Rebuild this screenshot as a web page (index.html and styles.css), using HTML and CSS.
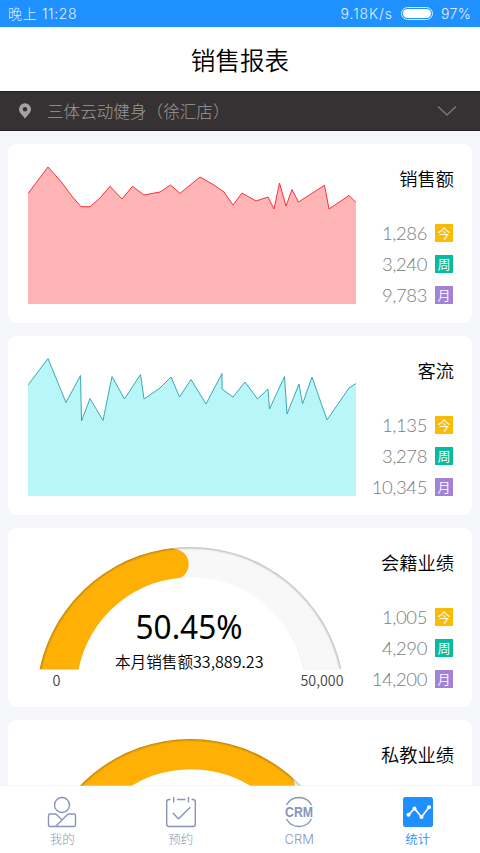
FILE: index.html
```html
<!DOCTYPE html>
<html lang="zh-CN">
<head>
<meta charset="utf-8">
<title>销售报表</title>
<link rel="stylesheet" href="styles.css">
</head>
<body>
<div class="app">
  <div class="status">
    <span class="clock">晚上 11:28</span>
    <span class="net">9.18K/s</span>
    <span class="battery"></span>
    <span class="pct">97%</span>
  </div>
  <header class="header"><h1>销售报表</h1></header>
  <div class="shop">
    <svg class="pin" width="12" height="16" viewBox="0 0 12 16"><path fill-rule="evenodd" d="M6 .3A6 6 0 0 0 0 6.300C0 9.800 4 12.500 6 15.700 8 12.500 12 9.800 12 6.300A6 6 0 0 0 6 .3ZM6 3.900a2.300 2.300 0 1 1 0 4.600a2.300 2.300 0 0 1 0-4.600Z"/></svg>
    <span class="shop-name">三体云动健身（徐汇店）</span>
    <svg class="chevron" width="20" height="12" viewBox="0 0 20 12"><path d="M1 1.500 10 10 19 1.500"/></svg>
  </div>
  <main class="cards">
    <section class="card">
      <svg class="chart" width="328" height="179" viewBox="28 144 328 179">
        <path class="area red" d="M28 193.500 48 167 61 181.500 71 195 81 206.700H90L100 198 110 186.300 122 199 132.500 186.300 144 195 160 192 170.500 185 180 193.300 200 177 214 185 224 192 233 205 242 193 256 201 268 197 274 209 279.500 183 286 206 292 189.500 298.500 202 324.500 185.300 329 209 349 195.500 356 202.500V304H28Z"/>
        <path class="line red-line" d="M28 193.500 48 167 61 181.500 71 195 81 206.700H90L100 198 110 186.300 122 199 132.500 186.300 144 195 160 192 170.500 185 180 193.300 200 177 214 185 224 192 233 205 242 193 256 201 268 197 274 209 279.500 183 286 206 292 189.500 298.500 202 324.500 185.300 329 209 349 195.500 356 202.500"/>
      </svg>
      <div class="info">
        <h2>销售额</h2>
        <div class="row"><span>1,286</span><b class="tag day">今</b></div>
        <div class="row"><span>3,240</span><b class="tag week">周</b></div>
        <div class="row"><span>9,783</span><b class="tag month">月</b></div>
      </div>
    </section>
    <section class="card">
      <svg class="chart" width="328" height="179" viewBox="28 336 328 179">
        <path class="area teal" d="M28 385 48 358.500 66 402.500 80.500 375.500 81.500 421 90 398.500 103 420.500 112 376.500 124.500 399 140.500 374.500 144 399 160 388 171 377 179.500 397 191 379.500 206 404 222 373.500V389L233 397 245 382 257.500 399 268 389 269.500 409 284.500 376.500 287 414 299 384 302.500 404 312 377 327 420 349 388 356 383.500V496H28Z"/>
        <path class="line teal-line" d="M28 385 48 358.500 66 402.500 80.500 375.500 81.500 421 90 398.500 103 420.500 112 376.500 124.500 399 140.500 374.500 144 399 160 388 171 377 179.500 397 191 379.500 206 404 222 373.500V389L233 397 245 382 257.500 399 268 389 269.500 409 284.500 376.500 287 414 299 384 302.500 404 312 377 327 420 349 388 356 383.500"/>
      </svg>
      <div class="info">
        <h2>客流</h2>
        <div class="row"><span>1,135</span><b class="tag day">今</b></div>
        <div class="row"><span>3,278</span><b class="tag week">周</b></div>
        <div class="row"><span>10,345</span><b class="tag month">月</b></div>
      </div>
    </section>
    <section class="card">
      <svg class="chart" width="328" height="179" viewBox="28 528 328 179">
        <defs>
          <clipPath id="band"><path d="M39.500 669.500A154.300 154.300 0 0 1 341.500 669.500H303.500A114.700 114.700 0 0 0 78.500 669.500Z"/></clipPath>
          <filter id="soft" x="-5%" y="-5%" width="110%" height="110%"><feGaussianBlur stdDeviation="0.900"/></filter>
        </defs>
        <g clip-path="url(#band)">
          <path class="track" d="M28 528H356V707H28Z"/>
          <path class="value" d="M28 528H173.500V549A15.200 15.200 0 0 1 177 579V707H28Z"/>
          <path class="rim" filter="url(#soft)" d="M39.500 669.500A154.300 154.300 0 0 1 341.500 669.500"/>
          <path class="edge" d="M341 669.500H303.500A114.700 114.700 0 0 0 177 579.500"/>
        </g>
        <text class="g-big" x="135.500" y="639" textLength="107" lengthAdjust="spacingAndGlyphs">50.45%</text>
        <text class="g-sub" x="115" y="667.500">本月销售额</text>
        <text class="g-sub" x="193" y="667.500" textLength="70.500" lengthAdjust="spacingAndGlyphs">33,889.23</text>
        <text class="g-end" x="52.500" y="686.300" textLength="8" lengthAdjust="spacingAndGlyphs">0</text>
        <text class="g-end" x="300.500" y="686.300" textLength="43" lengthAdjust="spacingAndGlyphs">50,000</text>
      </svg>
      <div class="info">
        <h2>会籍业绩</h2>
        <div class="row"><span>1,005</span><b class="tag day">今</b></div>
        <div class="row"><span>4,290</span><b class="tag week">周</b></div>
        <div class="row"><span>14,200</span><b class="tag month">月</b></div>
      </div>
    </section>
    <section class="card">
      <svg class="chart" width="328" height="179" viewBox="28 528 328 179">
        <g clip-path="url(#band)">
          <path class="track" d="M28 528H356V707H28Z"/>
          <path class="value" d="M28 528H262L290 583A15 15 0 0 1 294.800 595V600L260 607V707H28Z"/>
          <path class="rim" filter="url(#soft)" d="M39.500 669.500A154.300 154.300 0 0 1 341.500 669.500"/>
        </g>
      </svg>
      <div class="info">
        <h2>私教业绩</h2>
      </div>
    </section>
  </main>
  <nav class="tabs">
    <a class="tab">
      <svg width="30" height="32" viewBox="0 0 30 32"><circle cx="15" cy="9" r="7.500"/><path d="M8 30.500H3Q1.500 30.500 1.500 29V19.500Q1.500 18 3 18H7.500Q9 18 10 19L14.500 23.500M8.500 30.500 20 19Q21 18 22.500 18H27Q28.500 18 28.500 19.500V29Q28.500 30.500 27 30.500H8"/></svg>
      <span>我的</span>
    </a>
    <a class="tab">
      <svg width="32" height="32" viewBox="0 0 32 32"><path d="M5.500 3.500H4Q1.700 3.500 1.700 6V28Q1.700 30.500 4 30.500H28Q30.300 30.500 30.300 28V6Q30.300 3.500 28 3.500H26.500M12 3.500H20.500M8.700 1V6.500M23.500 1V6.500M7.800 17 13.500 22.700 25.300 11.300"/></svg>
      <span>预约</span>
    </a>
    <a class="tab">
      <svg width="36" height="32" viewBox="-2 0 36 32"><path d="M3.500 9A14.200 14.200 0 0 1 28.500 9M3.500 23A14.200 14.200 0 0 0 28.500 23"/><text class="crm" x="2" y="21" textLength="28" lengthAdjust="spacingAndGlyphs">CRM</text></svg>
      <span class="latin">CRM</span>
    </a>
    <a class="tab active">
      <svg width="32" height="32" viewBox="0 0 32 32"><rect class="tile" x="1" y="1" width="30" height="30" rx="2.500"/><path class="plot" d="M6.500 18.800 12.500 12.500 19.500 21 27 11.300"/><g class="dots"><circle cx="6.500" cy="18.800" r="2"/><circle cx="12.500" cy="12.500" r="2"/><circle cx="19.500" cy="21" r="2"/><circle cx="27" cy="11.300" r="2"/></g></svg>
      <span>统计</span>
    </a>
  </nav>
</div>
</body>
</html>
```

FILE: styles.css
```css
* { box-sizing: border-box; }
body {
  margin: 0;
  font-family: "Noto Sans CJK SC", sans-serif;
}
.app {
  width: 480px;
  height: 853px;
  display: flex;
  flex-direction: column;
  overflow: hidden;
  background: #f5f6f9;
}
.status {
  flex: none;
  height: 27px;
  display: flex;
  align-items: center;
  padding: 0 9px 0 8px;
  background: #1e90ff;
  color: #e4f1ff;
  font: 300 14px/26px Inter, "Noto Sans CJK SC", sans-serif;
}
.clock { flex: 1; letter-spacing: 0.65px; }
.net { letter-spacing: 0.9px; }
.pct { letter-spacing: 0.5px; margin-right: -0.5px; }
.battery {
  width: 32px;
  height: 13px;
  margin: 0 8px 0 8px;
  padding: 1px;
  border: 1px solid #dceeff;
  border-radius: 7px;
  background: #1e90ff;
}
.battery::before {
  content: "";
  display: block;
  height: 9px;
  border-radius: 5px;
  background: #fff;
}
.header {
  flex: none;
  height: 64px;
  background: #fff;
  text-align: center;
}
h1 {
  margin: 0;
  font-size: 24.6px;
  font-weight: 350;
  line-height: 64px;
  color: #000;
}
.shop {
  flex: none;
  height: 40px;
  display: flex;
  align-items: center;
  padding: 0 23px 0 19px;
  background: #363233;
  border-top: 1px solid #252122;
  border-bottom: 1px solid #252122;
  color: #9a999a;
}
.pin { fill: #a4a3a4; }
.shop-name {
  flex: 1;
  margin-left: 16px;
  font-size: 16.6px;
  font-weight: 300;
  line-height: 38px;
}
.chevron path {
  fill: none;
  stroke: #777576;
  stroke-width: 1.6;
}
.cards {
  flex: 1;
  min-height: 0;
  overflow: hidden;
  padding: 13px 8px 0;
  display: flex;
  flex-direction: column;
  gap: 13px;
}
.card {
  flex: none;
  height: 179px;
  display: flex;
  justify-content: space-between;
  padding: 0 18px 0 20px;
  background: #fff;
  border-radius: 9px;
}
.chart { display: block; flex: none; }
.red { fill: #ffb4b6; }
.teal { fill: #b9f6f9; }
.line { fill: none; stroke-width: 1; }
.red-line { stroke: #fb3038; }
.teal-line { stroke: #38aab1; }
.track { fill: #f8f8f8; }
.value { fill: #ffb005; }
.rim { fill: none; stroke: #000; stroke-opacity: 0.35; stroke-width: 2; }
.edge { fill: none; stroke: #eee; stroke-width: 1.5; }
.g-big { font: 400 33px "Noto Sans", sans-serif; }
.g-sub { font: 350 15.6px "Noto Sans CJK SC", sans-serif; fill: #000; }
.g-end { font: 350 15px "Noto Sans CJK SC", sans-serif; fill: #444; }
.info {
  display: flex;
  flex-direction: column;
  align-items: flex-end;
}
h2 {
  margin: 21px 0 27px;
  height: 26px;
  font-size: 18.3px;
  font-weight: 350;
  line-height: 26px;
  color: #000;
}
.row {
  height: 30.8px;
  display: flex;
  align-items: center;
  gap: 8px;
  padding-right: 1px;
  font: 300 18.5px/31px Lato, sans-serif;
  letter-spacing: -0.4px;
  color: #7c7c7c;
}
.tag {
  width: 18px;
  height: 18px;
  font: 350 13px/18px "Noto Sans CJK SC", sans-serif;
  letter-spacing: 0;
  text-align: center;
  color: #fff;
}
.day { background: #fabb03; }
.week { background: #07baa0; }
.month { background: #a082d9; }
.tabs {
  flex: none;
  height: 67px;
  display: flex;
  padding: 0 3px;
  background: #fff;
  box-shadow: 0 0 2px #dfe8f3;
  position: relative;
}
.tab {
  flex: 1;
  display: flex;
  flex-direction: column;
  align-items: center;
  padding-top: 10px;
  font-size: 12.5px;
  line-height: 18px;
  font-weight: 300;
  color: #8b97bd;
}
.tab span { margin-top: 2px; }
.tab path, .tab circle {
  fill: none;
  stroke: #8794bd;
  stroke-width: 1.4;
}
.crm {
  font: 700 14px "Liberation Sans", sans-serif;
  fill: #8794bd;
}
.tab .latin { font-family: Inter, sans-serif; font-size: 13px; }
.active { color: #1e90ff; font-weight: 350; }
.tile { fill: #1e90ff; }
.tab .plot { stroke: #fff; stroke-width: 1.7; }
.tab .dots circle { fill: #fff; stroke: none; }
```
